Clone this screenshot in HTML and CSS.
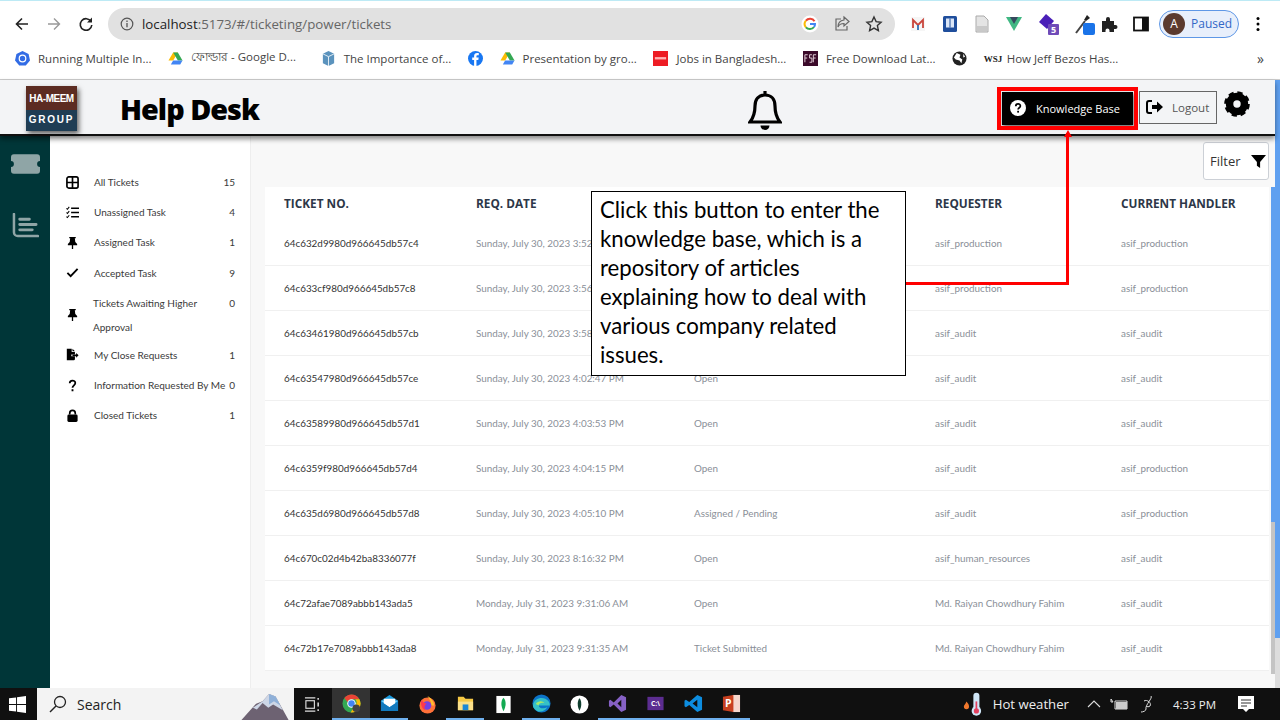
FILE: index.html
```html
<!DOCTYPE html>
<html lang="en">
<head>
  <meta charset="UTF-8">
  <title>Help Desk</title>
  <link rel="stylesheet" href="styles.css">
</head>
<body>

  <!-- browser toolbar -->
  <div class="toolbar">
    <svg class="nav-icon" viewBox="0 0 16 16"><path d="M14 8H2.5M8 2.5 2.5 8 8 13.5" fill="none" stroke="#222" stroke-width="1.6"/></svg>
    <svg class="nav-icon" viewBox="0 0 16 16"><path d="M2 8h11.5M8 2.5 13.5 8 8 13.5" fill="none" stroke="#999" stroke-width="1.4"/></svg>
    <svg class="nav-icon" viewBox="0 0 16 16"><path d="M13 5.5A5.8 5.8 0 1 0 13.8 9" fill="none" stroke="#222" stroke-width="1.6"/><path d="M14 1.5V6.5H9z" fill="#222"/></svg>
    <div class="address">
      <svg class="info-icon" viewBox="0 0 14 14"><circle cx="7" cy="7" r="5.8" fill="none" stroke="#555" stroke-width="1.2"/><path d="M7 6v4.2M7 3.6v1.3" stroke="#555" stroke-width="1.3"/></svg>
      <span class="url"><b>localhost</b>:5173/#/ticketing/power/tickets</span>
      <svg class="addr-icon" viewBox="0 0 18 18"><circle cx="9" cy="9" r="8.5" fill="#fff"/><path d="M13.5 6.2A5.2 5.2 0 0 0 4.9 5.7" fill="none" stroke="#ea4335" stroke-width="2"/><path d="M4.9 5.7a5.2 5.2 0 0 0 0 6.6" fill="none" stroke="#fbbc05" stroke-width="2"/><path d="M4.9 12.3a5.2 5.2 0 0 0 8.1-.3" fill="none" stroke="#34a853" stroke-width="2"/><path d="M9 9h5c0 1.2-.4 2.2-1 3" fill="none" stroke="#4285f4" stroke-width="2"/></svg>
      <svg class="addr-icon" viewBox="0 0 18 18"><path d="M8 4H3v11h11v-4" fill="none" stroke="#666" stroke-width="1.2"/><path d="M11 2l5 4.5-5 4.5V8.5c-3 0-5 1-6 3.5 0-4 2-6.500 6-7z" fill="none" stroke="#666" stroke-width="1.2"/></svg>
      <svg class="addr-icon" viewBox="0 0 18 18"><path d="M9 2l2.100 4.600 5 .6-3.700 3.400 1 5L9 13.100l-4.400 2.500 1-5L1.900 7.200l5-.6z" fill="none" stroke="#333" stroke-width="1.4"/></svg>
    </div>
    <div class="extensions">
      <svg class="ext-icon" viewBox="0 0 18 18"><rect x="2" y="2" width="14" height="14" fill="#f6f6f6"/><path d="M4 13V5l5 5 5-5v8" fill="none" stroke="#c9463d" stroke-width="1.8"/><path d="M9 10v5" stroke="#2f6fb5" stroke-width="1.8"/></svg>
      <svg class="ext-icon" viewBox="0 0 18 18"><rect x="2" y="1" width="14" height="16" rx="1.5" fill="#1f4e9c"/><rect x="5" y="3.5" width="8" height="9" fill="#dbe6f7"/><rect x="8.5" y="3.5" width="1" height="9" fill="#1f4e9c"/></svg>
      <svg class="ext-icon" viewBox="0 0 18 18"><path d="M3 1h8l4 4v12H3z" fill="#e4e4e4" stroke="#aaa"/><path d="M4 11h10v5H4z" fill="#c9c9c9"/></svg>
      <svg class="ext-icon" viewBox="0 0 18 18"><path d="M1 2h16L9 16z" fill="#41b883"/><path d="M5 2h8L9 9z" fill="#35495e"/></svg>
      <svg class="ext-icon ext-wide" viewBox="0 0 22 22"><path d="M9 1l8 7-7 8-8-7z" fill="#4a1fb8"/><rect x="11" y="11" width="11" height="11" rx="1" fill="#6f4bb8"/><text class="ext-num" x="16.5" y="20">5</text></svg>
      <svg class="ext-icon ext-wide ext-tight" viewBox="0 0 22 22"><path d="M3 20 12 8" stroke="#444" stroke-width="2"/><path d="M11 7l3-5 3 3-4 3z" fill="#222"/><rect x="10" y="10" width="12" height="12" rx="2" fill="#1a73e8"/></svg>
      <svg class="ext-icon" viewBox="0 0 18 18"><path d="M2 6h4V4a2 2 0 0 1 4 0v2h4v4h1.5a2 2 0 0 1 0 4H14v3H9.5v-1.500a2 2 0 0 0-4 0V17H2z" fill="#222"/></svg>
      <svg class="ext-icon" viewBox="0 0 18 18"><rect x="2" y="2.5" width="14" height="13" fill="none" stroke="#111" stroke-width="1.8"/><rect x="10" y="2.5" width="6" height="13" fill="#111"/></svg>
      <div class="profile"><span class="avatar">A</span><span>Paused</span></div>
      <svg class="menu-dots" viewBox="0 0 4 16"><circle cx="2" cy="2.5" r="1.5"/><circle cx="2" cy="8" r="1.5"/><circle cx="2" cy="13.5" r="1.5"/></svg>
    </div>
  </div>

  <!-- bookmarks -->
  <div class="bookmarks">
    <div class="bookmark"><svg viewBox="0 0 16 16"><path d="M8 0l6.5 3.200L16 10l-4.500 5.500h-7L0 10l1.500-6.800z" fill="#326ce5"/><circle cx="8" cy="8" r="3.5" fill="none" stroke="#fff" stroke-width="1.3"/></svg>Running Multiple In...</div>
    <div class="bookmark bookmark-bn"><svg viewBox="0 0 16 16"><path d="M5.5 1.500h5l-5 8.500H.5z" fill="#fbbc04"/><path d="M10.500 1.500l5 8.500h-5l-5-8.500z" fill="#34a853"/><path d="M3 14.500l2.500-4.500h10l-2.500 4.500z" fill="#4285f4"/></svg>ফোল্ডার - Google D...</div>
    <div class="bookmark"><svg viewBox="0 0 16 16"><path d="M8 0l6 3v10l-6 3-6-3V3z" fill="#5b93bd"/><path d="M8 6v10M2 3l6 3 6-3" stroke="#e8f0f5" fill="none"/></svg>The Importance of...</div>
    <div class="bookmark"><svg viewBox="0 0 16 16"><circle cx="8" cy="8" r="8" fill="#1877f2"/><path d="M9 16V9.500h2l.4-2.500H9V5.600c0-.8.300-1.200 1.200-1.200h1.300V2.200C11 2.100 10.300 2 9.700 2 7.700 2 6.500 3.200 6.500 5.300V7H4.500v2.500h2V16z" fill="#fff"/></svg></div>
    <div class="bookmark"><svg viewBox="0 0 16 16"><path d="M5.500 1.500h5l-5 8.500H.5z" fill="#fbbc04"/><path d="M10.500 1.500l5 8.500h-5l-5-8.500z" fill="#34a853"/><path d="M3 14.500l2.500-4.500h10l-2.500 4.500z" fill="#4285f4"/></svg>Presentation by gro...</div>
    <div class="bookmark"><svg viewBox="0 0 16 16"><rect width="16" height="16" fill="#ed1c24"/><rect x="2" y="6.5" width="12" height="2.5" fill="#ffb3b3"/></svg>Jobs in Bangladesh...</div>
    <div class="bookmark"><svg viewBox="0 0 16 16"><rect width="16" height="16" fill="#3b0a2a"/><path d="M2 4h3M2 4v8M2 7.500h2.500M7 4h2.500M7 4v3.500h2.500V12H7M11 4h3M11 4v8M11 7.500h2.500" stroke="#e9d5de" fill="none"/></svg>Free Download Lat...</div>
    <div class="bookmark"><svg viewBox="0 0 16 16"><circle cx="8" cy="8" r="7.5" fill="#222"/><path d="M5 2l4 2-1 3 3 2-1 4-2-3-4-1-2-2zM12 3l2 3-2 1z" fill="#fff"/></svg></div>
    <div class="bookmark"><span class="wsj">WSJ</span>How Jeff Bezos Has...</div>
    <span class="more">»</span>
  </div>

  <div class="page">
    <div class="app">

      <header class="app-header">
        <div class="logo">
          <span class="logo-top">HA-MEEM</span>
          <span class="logo-bottom">GROUP</span>
        </div>
        <h1 class="title">Help Desk</h1>
        <svg class="bell" viewBox="0 0 34 42"><path d="M17 2v4M17 6c-6.500 0-10 4.500-10 11 0 7-1 11-5 16h30c-4-5-5-9-5-16 0-6.500-3.500-11-10-11z" fill="none" stroke="#000" stroke-width="3.2"/><path d="M12.500 36.500a4.500 4.500 0 0 0 9 0z" fill="#000"/></svg>
        <button class="kb-btn">
          <svg viewBox="0 0 16 16"><circle cx="8" cy="8" r="8" fill="#fff"/><path d="M5.800 6.200c0-3 4.600-3 4.600-.2 0 1.800-2.300 1.700-2.300 3.600" fill="none" stroke="#000" stroke-width="1.7"/><rect x="7.2" y="10.8" width="1.8" height="1.8" fill="#000"/></svg>
          Knowledge Base
        </button>
        <button class="logout-btn">
          <svg viewBox="0 0 18 16"><path d="M6 2H3a2 2 0 0 0-2 2v8a2 2 0 0 0 2 2h3" fill="none" stroke="#000" stroke-width="2"/><path d="M6 6h5V2.500L17 8l-6 5.500V10H6z" fill="#000"/></svg>
          Logout
        </button>
        <svg class="gear" viewBox="0 0 28 28"><circle cx="14" cy="14" r="8" fill="none" stroke="#000" stroke-width="8"/><circle cx="14" cy="14" r="12" fill="none" stroke="#000" stroke-width="3.6" stroke-dasharray="5.5 3.925"/></svg>
      </header>

      <div class="main">
        <nav class="rail">
          <svg class="rail-ticket" viewBox="0 0 30 20"><path d="M3 0h24a3 3 0 0 1 3 3v4a3 3 0 0 0 0 6v4a3 3 0 0 1-3 3H3a3 3 0 0 1-3-3v-4a3 3 0 0 0 0-6V3a3 3 0 0 1 3-3z" fill="#8fa5a6"/></svg>
          <svg class="rail-chart" viewBox="0 0 28 26"><path d="M2 1v19a4 4 0 0 0 4 4h21" fill="none" stroke="#8fa5a6" stroke-width="2.6" stroke-linecap="round"/><path d="M8 6.500h10M8 12h17M8 17.500h13" stroke="#8fa5a6" stroke-width="3" stroke-linecap="round"/></svg>
        </nav>

        <aside class="sidebar">
          <div class="side-row">
            <svg viewBox="0 0 14 14"><rect x="1" y="1" width="12" height="12" rx="2" fill="none" stroke="#000" stroke-width="1.8"/><path d="M7 1v12M1 7h12" stroke="#000" stroke-width="1.8"/></svg>
            <span class="side-label">All Tickets</span><span class="side-count">15</span>
          </div>
          <div class="side-row">
            <svg viewBox="0 0 14 14"><path d="M5.500 2.500H14M5.500 7H14M5.500 11.500H14" stroke="#000" stroke-width="1.6"/><path d="M.5 2.500l1 1L3.500 1M.5 7l1 1 2-2.500M.5 11.500l1 1 2-2.500" fill="none" stroke="#000" stroke-width="1.1"/></svg>
            <span class="side-label">Unassigned Task</span><span class="side-count">4</span>
          </div>
          <div class="side-row">
            <svg viewBox="0 0 14 14"><path d="M3.500 1h7v1.500H9.500l.5 4 2 2V10H2V8.500l2-2 .5-4H3.500zM6.300 10h1.400v4H6.300z" fill="#000"/></svg>
            <span class="side-label">Assigned Task</span><span class="side-count">1</span>
          </div>
          <div class="side-row">
            <svg viewBox="0 0 14 14"><path d="M1.500 7.500l3.500 3.500 7.500-8" fill="none" stroke="#000" stroke-width="2"/></svg>
            <span class="side-label">Accepted Task</span><span class="side-count">9</span>
          </div>
          <div class="side-row side-row-tall">
            <svg viewBox="0 0 14 14"><path d="M3.500 1h7v1.500H9.500l.5 4 2 2V10H2V8.500l2-2 .5-4H3.500zM6.300 10h1.400v4H6.300z" fill="#000"/></svg>
            <span class="side-label">Tickets Awaiting Higher Approval</span><span class="side-count">0</span>
          </div>
          <div class="side-row">
            <svg viewBox="0 0 16 14"><path d="M1 0h6v4h4v3H6.500v2H11v3.500a1.500 1.500 0 0 1-1.500 1.500H1z" fill="#000"/><path d="M8 0l3 3H8zM8 7h4.500V5l3 3-3 3V9H8z" fill="#000"/></svg>
            <span class="side-label">My Close Requests</span><span class="side-count">1</span>
          </div>
          <div class="side-row">
            <svg viewBox="0 0 14 14"><path d="M4 4.500C4 .8 10 .8 10 4.300 10 6.800 7 6.800 7 9.500" fill="none" stroke="#000" stroke-width="1.9"/><rect x="6" y="11" width="2" height="2.200" fill="#000"/></svg>
            <span class="side-label">Information Requested By Me</span><span class="side-count">0</span>
          </div>
          <div class="side-row">
            <svg viewBox="0 0 14 14"><path d="M4 6V4.500a3 3 0 0 1 6 0V6" fill="none" stroke="#000" stroke-width="1.8"/><rect x="1.5" y="6" width="11" height="8" rx="1.5" fill="#000"/></svg>
            <span class="side-label">Closed Tickets</span><span class="side-count">1</span>
          </div>
        </aside>

        <section class="content">
          <div class="filter-bar">
            <button class="filter-btn">Filter
              <svg viewBox="0 0 14 14"><path d="M0 1h14L8.500 7.500V13L5.500 11V7.500z" fill="#000"/></svg>
            </button>
          </div>
          <div class="table-wrap">
            <div class="tickets">
              <div class="t-row t-head"><span>TICKET NO.</span><span>REQ. DATE</span><span></span><span>REQUESTER</span><span>CURRENT HANDLER</span></div>
              <div class="t-row"><span class="t-id">64c632d9980d966645db57c4</span><span>Sunday, July 30, 2023 3:52</span><span></span><span>asif_production</span><span>asif_production</span></div>
              <div class="t-row"><span class="t-id">64c633cf980d966645db57c8</span><span>Sunday, July 30, 2023 3:56</span><span></span><span>asif_production</span><span>asif_production</span></div>
              <div class="t-row"><span class="t-id">64c63461980d966645db57cb</span><span>Sunday, July 30, 2023 3:58</span><span></span><span>asif_audit</span><span>asif_audit</span></div>
              <div class="t-row"><span class="t-id">64c63547980d966645db57ce</span><span>Sunday, July 30, 2023 4:02:47 PM</span><span>Open</span><span>asif_audit</span><span>asif_audit</span></div>
              <div class="t-row"><span class="t-id">64c63589980d966645db57d1</span><span>Sunday, July 30, 2023 4:03:53 PM</span><span>Open</span><span>asif_audit</span><span>asif_audit</span></div>
              <div class="t-row"><span class="t-id">64c6359f980d966645db57d4</span><span>Sunday, July 30, 2023 4:04:15 PM</span><span>Open</span><span>asif_audit</span><span>asif_production</span></div>
              <div class="t-row"><span class="t-id">64c635d6980d966645db57d8</span><span>Sunday, July 30, 2023 4:05:10 PM</span><span>Assigned / Pending</span><span>asif_audit</span><span>asif_production</span></div>
              <div class="t-row"><span class="t-id">64c670c02d4b42ba8336077f</span><span>Sunday, July 30, 2023 8:16:32 PM</span><span>Open</span><span>asif_human_resources</span><span>asif_audit</span></div>
              <div class="t-row"><span class="t-id">64c72afae7089abbb143ada5</span><span>Monday, July 31, 2023 9:31:06 AM</span><span>Open</span><span>Md. Raiyan Chowdhury Fahim</span><span>asif_audit</span></div>
              <div class="t-row"><span class="t-id">64c72b17e7089abbb143ada8</span><span>Monday, July 31, 2023 9:31:35 AM</span><span>Ticket Submitted</span><span>Md. Raiyan Chowdhury Fahim</span><span>asif_audit</span></div>
            </div>
            <div class="inner-scroll"><div class="inner-thumb"></div></div>
          </div>
        </section>
      </div>
    </div>
    <div class="page-scroll"><div class="page-thumb"></div></div>
  </div>

  <!-- windows taskbar -->
  <footer class="taskbar">
    <svg class="win-logo" viewBox="0 0 18 18"><path d="M0 2.500l7.500-1V8.500H0zM8.500 1.300 18 0v8.500H8.500zM0 9.500h7.500v7L0 15.500zM8.500 9.500H18V18l-9.500-1.300z" fill="#fff"/></svg>
    <div class="search-box">
      <svg viewBox="0 0 18 18"><circle cx="11" cy="7" r="5.5" fill="none" stroke="#222" stroke-width="1.3"/><path d="M7 11l-6 6" stroke="#222" stroke-width="1.4"/></svg>
      <span>Search</span>
      <svg class="mountain" viewBox="0 0 58 32"><path d="M0 32 18 12l8-3 8-9 8 3 16 29z" fill="#6d6272"/><path d="M14 17l12-8 8-9 8 3 9 17-12-7-6 4-7-6-7 8z" fill="#cdd6e6"/><path d="M34 0l8 3 6 11-8-5-6 4z" fill="#8fb0d8"/></svg>
    </div>
    <svg class="task-view" viewBox="0 0 18 18"><path d="M1 2h11M1 16h11" stroke="#ddd" stroke-width="1.2"/><rect x="2" y="5" width="9" height="8" fill="none" stroke="#ddd" stroke-width="1.2"/><path d="M15 2v2M15 7v4M15 14v2" stroke="#ddd" stroke-width="1.6"/></svg>
    <div class="task-app task-active">
      <svg viewBox="0 0 20 20"><circle cx="10" cy="10" r="9.5" fill="#34a853"/><path d="M10 .5A9.500 9.500 0 0 1 18.300 5.500H10A4.500 4.500 0 0 0 5.800 8.400L2.500 4.300A9.500 9.500 0 0 1 10 .5z" fill="#ea4335"/><path d="M18.300 5.500A9.500 9.500 0 0 1 9 19.500L13.500 12.500A4.500 4.500 0 0 0 14 5.500z" fill="#fbbc05"/><circle cx="10" cy="10" r="4.5" fill="#fff"/><circle cx="10" cy="10" r="3.4" fill="#4285f4"/><circle cx="15" cy="15" r="4" fill="#444"/></svg>
    </div>
    <div class="task-app task-open">
      <svg viewBox="0 0 20 20"><path d="M1 7l9-6 9 6v11H1z" fill="#1b9de2"/><path d="M1 7l9 6 9-6" fill="#7fd0f7"/><path d="M4 5h12v5l-6 4-6-4z" fill="#fff"/><path d="M1 8l9 6 9-6v10H1z" fill="#1279bd"/></svg>
    </div>
    <div class="task-app">
      <svg viewBox="0 0 20 20"><circle cx="10" cy="11" r="8.5" fill="#ff7139"/><path d="M10 1c3 2 7 5 7 10h-3C14 7 12 4 10 1z" fill="#ffbd2e"/><circle cx="9.5" cy="11" r="4.5" fill="#7542e5"/><path d="M4 5c1 3 3 4 5 4-2 2-3 5-1 7-4-1-6-7-4-11z" fill="#ff3750"/></svg>
    </div>
    <div class="task-app task-open">
      <svg viewBox="0 0 20 20"><path d="M2 3h6l2 2h8v12H2z" fill="#f7c945"/><path d="M2 8h16v9H2z" fill="#fbe08a"/><rect x="7" y="11" width="6" height="6" fill="#1b87d6"/></svg>
    </div>
    <div class="task-app">
      <svg viewBox="0 0 20 20"><rect x="2.5" y="1" width="15" height="18" fill="#fff"/><path d="M10 3c3 3 3 9 0 14-3-5-3-11 0-14z" fill="#13aa52"/></svg>
    </div>
    <div class="task-app task-open">
      <svg viewBox="0 0 20 20"><circle cx="10" cy="10" r="9.5" fill="#0c74c9"/><path d="M1 12C2 5 9 3 14 5c3 1.500 5 4 4.800 7H7c.5 3 5 4 9 2-2 4-7 5.500-11 3.500C2.500 16 1 14 1 12z" fill="#35c1c8"/><path d="M7 12c0-2 3-3.500 6-2.500-1-2.500-7-3-9 1z" fill="#a7e86b"/></svg>
    </div>
    <div class="task-app">
      <svg viewBox="0 0 20 20"><circle cx="10" cy="10" r="9.5" fill="#fff"/><path d="M10 3.500c2.500 2.500 2.500 9 0 13-2.500-4-2.500-10.500 0-13z" fill="#0f3d2e"/></svg>
    </div>
    <div class="task-app task-open">
      <svg viewBox="0 0 20 20"><path d="M14 1l5 2.500v13L14 19 6 11l-3.500 3L1 13V7l1.500-1L6 9zM14 6l-4 4 4 4z" fill="#8661c5"/></svg>
    </div>
    <div class="task-app task-open">
      <svg viewBox="0 0 20 20"><rect x="1.5" y="3" width="17" height="14" fill="#5c2d91"/><text class="term-text" x="10" y="13">C:\</text></svg>
    </div>
    <div class="task-app task-open">
      <svg viewBox="0 0 20 20"><path d="M14 1l5 2.500v13L14 19 5.500 11.500 2 14l-1.500-1V7L2 6l3.500 2.500zM14 6l-5 4 5 4z" fill="#0d8de0"/></svg>
    </div>
    <div class="task-app task-open">
      <svg viewBox="0 0 20 20"><path d="M11 1h8v18h-8z" fill="#f6d7cc"/><path d="M1 3l11-2v18L1 17z" fill="#c8401f"/><text class="ppt-text" x="6.5" y="13.5">P</text></svg>
    </div>
    <div class="tray">
      <svg class="thermo" viewBox="0 0 22 28"><path d="M4 11c1.500 2 3 3 3 6a3 3 0 0 1-6 0c0-2 2-3 3-6z" fill="#f0782d"/><rect x="12" y="1" width="7" height="20" rx="3.5" fill="#cfe6f7"/><circle cx="15.5" cy="22" r="5.5" fill="#cfe6f7"/><rect x="14.5" y="11" width="2" height="10" fill="#e3405f"/><circle cx="15.5" cy="22" r="3" fill="#e3405f"/></svg>
      <span class="weather">Hot weather</span>
      <svg class="chevron" viewBox="0 0 14 8"><path d="M1 7l6-6 6 6" fill="none" stroke="#ddd" stroke-width="1.1"/></svg>
      <svg class="battery" viewBox="0 0 18 12"><path d="M1 1l2 3h-2zM5 3h12v8H5z" fill="none" stroke="#ddd"/><rect x="6" y="4" width="11" height="7" fill="#ccc"/></svg>
      <svg class="pen" viewBox="0 0 14 18"><path d="M11 1c2 2-6 9-5 13 0 2-3 3-5 3M4 6c3-2 8 2 6 5-1 1-3 1-4 0" fill="none" stroke="#ddd"/></svg>
      <span class="clock">4:33 PM</span>
      <svg class="notify" viewBox="0 0 18 18"><path d="M1 1h16v13h-5l-3 3-3-3H1z" fill="#fff"/><path d="M4 5h10M4 8h10M4 11h6" stroke="#333"/></svg>
    </div>
  </footer>

  <!-- tutorial annotation drawn over the screen -->
  <div class="connector"></div>
  <div class="callout">Click this button to enter the knowledge base, which is a repository of articles explaining how to deal with various company related issues.</div>

</body>
</html>
```

FILE: styles.css
```css
* {
  box-sizing: border-box;
}

body {
  margin: 0;
  width: 1280px;
  height: 720px;
  overflow: hidden;
  position: relative;
  font-family: "Open Sans", sans-serif;
  background: #fff;
  display: flex;
  flex-direction: column;
}

/* browser toolbar */
.toolbar {
  height: 44px;
  display: flex;
  align-items: center;
  padding: 2px 0 0 14px;
  background: #fff;
  border-top: 1px solid #bdeaf5;
}

.nav-icon {
  width: 16px;
  height: 16px;
  margin-right: 16px;
}

.address {
  width: 787px;
  height: 32px;
  margin-left: -2px;
  padding: 0 12px;
  border-radius: 16px;
  background: #e1e1e1;
  display: flex;
  align-items: center;
}

.info-icon {
  width: 14px;
  height: 14px;
}

.url {
  margin-left: 8px;
  flex: 1;
  font-size: 13.3px;
  color: #666;
}

.url b {
  font-weight: 400;
  color: #222;
}

.addr-icon {
  width: 18px;
  height: 18px;
  margin-left: 14px;
}

.extensions {
  display: flex;
  align-items: center;
  padding-left: 14px;
  flex: 1;
}

.ext-icon {
  width: 18px;
  height: 18px;
  margin-right: 14px;
}

.ext-wide {
  width: 22px;
  height: 22px;
}

.ext-tight {
  margin-right: 5px;
}

.ext-num {
  font-size: 9px;
  font-weight: 700;
  fill: #fff;
  text-anchor: middle;
}

.profile {
  width: 80px;
  height: 28px;
  margin-left: -5px;
  padding: 0 3px;
  border: 1.5px solid #5e97e6;
  border-radius: 14px;
  background: #e8effb;
  display: flex;
  align-items: center;
  gap: 6px;
  font-size: 12px;
  color: #3367c6;
}

.avatar {
  width: 22px;
  height: 22px;
  border-radius: 50%;
  background: #5b3a2e;
  color: #fff;
  display: flex;
  align-items: center;
  justify-content: center;
}

.menu-dots {
  width: 4px;
  height: 16px;
  margin-left: 17px;
}

/* bookmarks */
.bookmarks {
  height: 36px;
  padding: 0 0 6px 15px;
  display: flex;
  align-items: center;
  gap: 16.6px;
  border-bottom: 1px solid #ccc;
  font-size: 11.5px;
  color: #444;
  white-space: nowrap;
}

.bookmark {
  display: flex;
  align-items: center;
  gap: 8px;
}

.bookmark svg {
  width: 15px;
  height: 15px;
}

.bookmark-bn {
  min-width: 136px;
}

.wsj {
  width: 15px;
  font-family: "Liberation Serif", serif;
  font-size: 9px;
  font-weight: 700;
  color: #222;
}

.more {
  margin-left: auto;
  margin-right: 16px;
  font-size: 14px;
}

/* page */
.page {
  height: 608px;
  display: flex;
}

.app {
  flex: 1;
  min-width: 0;
  display: flex;
  flex-direction: column;
}

.page-scroll {
  width: 5px;
  background: #ddd;
}

.page-thumb {
  height: 558px;
  background: #5fa0f0;
}

.app-header {
  height: 56px;
  flex-shrink: 0;
  padding: 0 25px 0 26px;
  display: flex;
  align-items: center;
  background: #f3f4f6;
  border-bottom: 2px solid #111;
  box-shadow: 0 3px 5px rgba(0, 0, 0, 0.45);
  position: relative;
  z-index: 1;
}

.logo {
  width: 51px;
  height: 45px;
  margin-top: 2px;
  display: flex;
  flex-direction: column;
  box-shadow: 2px 3px 5px rgba(0, 0, 0, 0.6);
  color: #fff;
  text-align: center;
  font-family: "Liberation Sans", sans-serif;
  font-weight: 700;
}

.logo-top {
  height: 24px;
  background: #5c2c22;
  font-size: 10px;
  line-height: 25px;
  letter-spacing: -0.5px;
}

.logo-bottom {
  flex: 1;
  background: #1f3d54;
  font-size: 10px;
  line-height: 20px;
  letter-spacing: 1.8px;
}

.title {
  margin: 3px 0 0 43px;
  width: 139px;
  font-size: 28.8px;
  font-weight: 800;
  color: #000;
  letter-spacing: -1px;
  white-space: nowrap;
}

.bell {
  width: 34px;
  height: 42px;
  margin-left: 489px;
  margin-top: 6px;
}

.kb-btn {
  margin-left: auto;
  margin-top: 2px;
  width: 131px;
  height: 33px;
  padding: 0 0 0 8px;
  border: none;
  background: #000;
  color: #fff;
  font-family: inherit;
  font-size: 11px;
  display: flex;
  align-items: center;
  gap: 10px;
  box-shadow: 1px 2px 4px rgba(0, 0, 0, 0.6);
  outline: 4px solid #f00;
  outline-offset: 1px;
}

.kb-btn svg {
  width: 16px;
  height: 16px;
}

.logout-btn {
  width: 78px;
  height: 33px;
  margin-left: 6px;
  padding: 0 0 0 6px;
  border: 1px solid #666;
  background: #f3f4f6;
  color: #555;
  font-family: inherit;
  font-size: 11.5px;
  display: flex;
  align-items: center;
  gap: 8px;
}

.logout-btn svg {
  width: 18px;
  height: 16px;
}

.gear {
  width: 26px;
  height: 26px;
  margin-left: 7px;
  margin-top: -6px;
}

.main {
  flex: 1;
  min-height: 0;
  display: flex;
}

.rail {
  width: 50px;
  flex-shrink: 0;
  background: #003638;
  display: flex;
  flex-direction: column;
  align-items: center;
  padding-top: 18px;
  gap: 39px;
}

.rail-ticket {
  width: 29px;
  height: 20px;
}

.rail-chart {
  width: 27px;
  height: 25px;
}

.sidebar {
  width: 201px;
  flex-shrink: 0;
  background: #fff;
  padding: 31px 15px 0 16px;
  border-right: 1px solid #eee;
}

.side-row {
  height: 30.2px;
  display: flex;
  align-items: center;
  font-family: Lato, sans-serif;
  font-size: 10px;
  color: #3a3a3a;
}

.side-row svg {
  width: 13px;
  height: 13px;
  flex-shrink: 0;
}

.side-label {
  margin-left: 15px;
  flex: 1;
  white-space: nowrap;
}

.side-count {
  text-align: right;
}

.side-row-tall {
  height: 52px;
  align-items: flex-start;
  line-height: 24px;
  padding-top: 3px;
}

.side-row-tall svg {
  margin-top: 17px;
}

.side-row-tall .side-label {
  margin-left: 14px;
  white-space: normal;
}

.content {
  flex: 1;
  min-width: 0;
  background: #f8f8f8;
  padding-left: 14px;
  display: flex;
  flex-direction: column;
}

.filter-bar {
  height: 51px;
  display: flex;
  justify-content: flex-end;
  align-items: flex-start;
  padding: 6px 6px 0 0;
}

.filter-btn {
  width: 66px;
  height: 38px;
  padding: 0 0 0 6px;
  border: 1px solid #ccd0d6;
  border-radius: 3px;
  background: #fff;
  color: #333;
  font-family: inherit;
  font-size: 13px;
  display: flex;
  align-items: center;
  gap: 10px;
}

.filter-btn svg {
  width: 15px;
  height: 15px;
}

.table-wrap {
  display: flex;
  gap: 2px;
  align-items: flex-start;
}

.tickets {
  flex: 1;
  background: #fff;
  font-family: Lato, sans-serif;
  font-size: 9.9px;
  color: #8a8f98;
}

.t-row {
  height: 45px;
  padding-left: 19px;
  display: grid;
  grid-template-columns: 192px 218px 241px 186px 1fr;
  align-items: center;
  border-bottom: 1px solid #f0f0f0;
  white-space: nowrap;
}

.t-head {
  height: 34px;
  padding-bottom: 2px;
  border-bottom: none;
  font-family: "Open Sans", sans-serif;
  font-size: 11.8px;
  font-weight: 700;
  color: #2d3748;
}

.t-id {
  color: #333;
}

.inner-scroll {
  width: 4px;
  height: 487px;
  background: #c4c4c4;
}

.inner-thumb {
  height: 335px;
  background: #5fa0f0;
}

/* taskbar */
.taskbar {
  height: 32px;
  flex-shrink: 0;
  background: #101010;
  display: flex;
  align-items: center;
  color: #eee;
  padding-left: 9px;
}

.win-logo {
  width: 17px;
  height: 17px;
}

.search-box {
  width: 257px;
  height: 32px;
  margin-left: 11px;
  padding-left: 12px;
  background: #f3f3f3;
  display: flex;
  align-items: center;
  gap: 10px;
  font-size: 14px;
  color: #222;
  overflow: hidden;
}

.search-box svg {
  width: 18px;
  height: 18px;
}

.search-box .mountain {
  width: 58px;
  height: 26px;
  margin-left: auto;
  align-self: flex-end;
}

.task-view {
  width: 17px;
  height: 17px;
  margin: 0 11px 0 10px;
}

.task-app {
  width: 38px;
  height: 32px;
  display: flex;
  align-items: center;
  justify-content: center;
}

.task-app svg {
  width: 19px;
  height: 19px;
}

.task-active {
  background: #333;
  border-bottom: 2px solid #6fb0ee;
}

.task-open {
  border-bottom: 2px solid #6fb0ee;
}

.term-text {
  font-size: 7px;
  font-weight: 700;
  fill: #fff;
  text-anchor: middle;
}

.ppt-text {
  font-size: 11px;
  font-weight: 700;
  fill: #fff;
  text-anchor: middle;
}

.tray {
  margin-left: auto;
  display: flex;
  align-items: center;
  padding-right: 25px;
}

.thermo {
  width: 19px;
  height: 26px;
}

.weather {
  margin-left: 11px;
  font-size: 13.2px;
}

.chevron {
  width: 14px;
  height: 8px;
  margin-left: 18px;
}

.battery {
  width: 18px;
  height: 12px;
  margin-left: 9px;
}

.pen {
  width: 14px;
  height: 18px;
  margin-left: 12px;
}

.clock {
  margin-left: 19px;
  font-size: 11.5px;
}

.notify {
  width: 18px;
  height: 18px;
  margin-left: 21px;
}

/* annotation */
.connector {
  position: absolute;
  left: 899px;
  top: 133px;
  width: 170px;
  height: 152px;
  border-right: 3px solid #f00;
  border-bottom: 3px solid #f00;
  z-index: 2;
}

/* arrowhead where the line meets the red box */
.connector::after {
  content: "";
  position: absolute;
  right: -6px;
  top: -3px;
  border-left: 4.5px solid transparent;
  border-right: 4.5px solid transparent;
  border-bottom: 7px solid #f00;
}

.callout {
  position: absolute;
  left: 591px;
  top: 191px;
  width: 315px;
  height: 185px;
  padding: 3px 8px;
  border: 1px solid #000;
  background: #fff;
  color: #000;
  font-family: Lato, sans-serif;
  font-size: 22.2px;
  line-height: 29px;
  z-index: 3;
}
```
